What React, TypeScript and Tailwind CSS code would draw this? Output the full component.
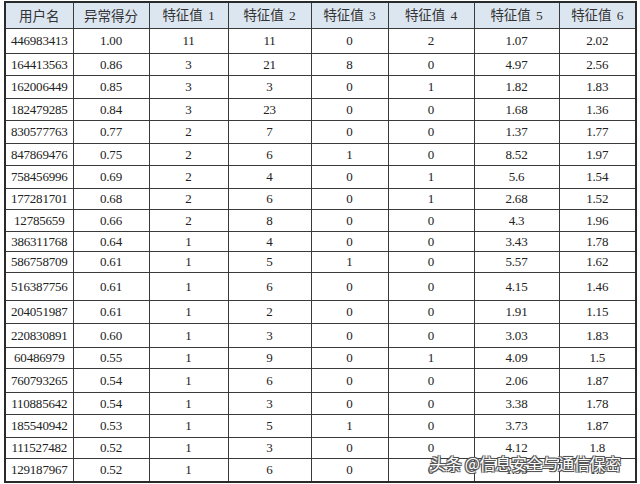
import React from 'react';

const headers = ['用户名', '异常得分', '特征值 1', '特征值 2', '特征值 3', '特征值 4', '特征值 5', '特征值 6'];

const colWidths = ['w-[68px]', 'w-[76px]', 'w-[79px]', 'w-[83px]', 'w-[77px]', 'w-[86px]', 'w-[85px]', 'w-[77px]'];

// row heights read off the screenshot, the scan is a bit uneven
const rows: { h: string; cells: string[] }[] = [
  { h: 'h-[25px]', cells: ['446983413', '1.00', '11', '11', '0', '2', '1.07', '2.02'] },
  { h: 'h-[22px]', cells: ['164413563', '0.86', '3', '21', '8', '0', '4.97', '2.56'] },
  { h: 'h-[23px]', cells: ['162006449', '0.85', '3', '3', '0', '1', '1.82', '1.83'] },
  { h: 'h-[22px]', cells: ['182479285', '0.84', '3', '23', '0', '0', '1.68', '1.36'] },
  { h: 'h-[23px]', cells: ['830577763', '0.77', '2', '7', '0', '0', '1.37', '1.77'] },
  { h: 'h-[22px]', cells: ['847869476', '0.75', '2', '6', '1', '0', '8.52', '1.97'] },
  { h: 'h-[23px]', cells: ['758456996', '0.69', '2', '4', '0', '1', '5.6', '1.54'] },
  { h: 'h-[21px]', cells: ['177281701', '0.68', '2', '6', '0', '1', '2.68', '1.52'] },
  { h: 'h-[22px]', cells: ['12785659', '0.66', '2', '8', '0', '0', '4.3', '1.96'] },
  { h: 'h-[20px]', cells: ['386311768', '0.64', '1', '4', '0', '0', '3.43', '1.78'] },
  { h: 'h-[21px]', cells: ['586758709', '0.61', '1', '5', '1', '0', '5.57', '1.62'] },
  { h: 'h-[28px]', cells: ['516387756', '0.61', '1', '6', '0', '0', '4.15', '1.46'] },
  { h: 'h-[23px]', cells: ['204051987', '0.61', '1', '2', '0', '0', '1.91', '1.15'] },
  { h: 'h-[24px]', cells: ['220830891', '0.60', '1', '3', '0', '0', '3.03', '1.83'] },
  { h: 'h-[21px]', cells: ['60486979', '0.55', '1', '9', '0', '1', '4.09', '1.5'] },
  { h: 'h-[24px]', cells: ['760793265', '0.54', '1', '6', '0', '0', '2.06', '1.87'] },
  { h: 'h-[22px]', cells: ['110885642', '0.54', '1', '3', '0', '0', '3.38', '1.78'] },
  { h: 'h-[23px]', cells: ['185540942', '0.53', '1', '5', '1', '0', '3.73', '1.87'] },
  { h: 'h-[21px]', cells: ['111527482', '0.52', '1', '3', '0', '0', '4.12', '1.8'] },
  { h: 'h-[24px]', cells: ['129187967', '0.52', '1', '6', '0', '0', '1.93', '1.3'] },
];

const App = () => {
  return (
    <div className="relative w-[640px] h-[484px] bg-white overflow-hidden pt-[1px] pl-[4px] font-['Liberation_Serif','Noto_Sans_CJK_SC',serif] text-[#222]">
      <table className="border-collapse border-2 border-[#2a2a2a] table-fixed w-[631px]">
        <thead>
          <tr className="h-[26px] bg-[#dce6f1]">
            {headers.map((h, i) => (
              <th
                key={h}
                className={`${colWidths[i]} border border-[#3a3a3a] p-0 text-center font-normal text-[13.5px] text-[#333] font-['Noto_Sans_CJK_SC',serif]`}
              >
                {h.includes(' ') ? (
                  <span>
                    {h.split(' ')[0]}
                    <span className="ml-[5px] font-['Liberation_Serif',serif]">{h.split(' ')[1]}</span>
                  </span>
                ) : (
                  h
                )}
              </th>
            ))}
          </tr>
        </thead>
        <tbody>
          {rows.map((r) => (
            <tr key={r.cells[0]} className={r.h}>
              {r.cells.map((c, j) => (
                <td key={j} className="border border-[#3a3a3a] p-0 text-center text-[13px] leading-none tracking-[-0.2px]">
                  {c}
                </td>
              ))}
            </tr>
          ))}
        </tbody>
      </table>

      {/* watermark */}
      <div className="absolute left-[430px] top-[455px] whitespace-nowrap text-[16px] leading-none tracking-[-0.3px] text-white font-['Noto_Sans_CJK_SC',sans-serif] [text-shadow:-1px_-1px_0_#555,1px_-1px_0_#555,-1px_1px_0_#555,1px_1px_0_#555,0_0_2px_#333]">
        头条 @信息安全与通信保密
      </div>
    </div>
  );
};

export default App;
